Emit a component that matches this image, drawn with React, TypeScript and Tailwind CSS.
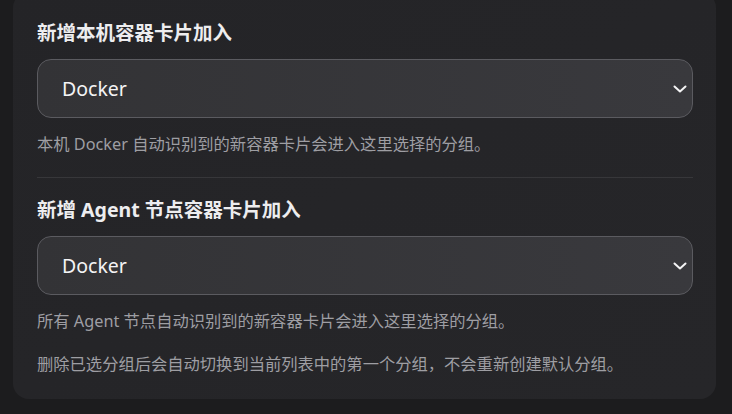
import { useState } from 'react'

const groups = ['Docker', 'Default', 'Web', 'Database']

interface GroupSelectProps {
  value: string
  onChange: (value: string) => void
}

function GroupSelect({ value, onChange }: GroupSelectProps) {
  return (
    <div className="relative">
      <select
        value={value}
        onChange={(e) => onChange(e.target.value)}
        className="block w-full h-[59px] appearance-none rounded-[14px] border border-[#5b5b60] bg-gradient-to-r from-[#333336] to-[#39393d] pl-6 pr-10 pt-px text-[19.5px] text-[#f4f4f5] outline-none"
      >
        {groups.map((g) => (
          <option key={g} value={g}>
            {g}
          </option>
        ))}
      </select>
      <svg
        viewBox="0 0 14 8"
        className="pointer-events-none absolute right-[6px] top-1/2 -translate-y-1/2 w-[14px] h-[8px]"
        fill="none"
        stroke="#f4f4f5"
        strokeWidth="2"
        strokeLinecap="round"
        strokeLinejoin="round"
      >
        <polyline points="1.5,1.5 7,6.5 12.5,1.5" />
      </svg>
    </div>
  )
}

export default function App() {
  const [local, setLocal] = useState('Docker')
  const [agent, setAgent] = useState('Docker')

  return (
    <div
      className="min-h-[414px] w-full bg-[#1c1c1e] overflow-hidden"
      style={{ fontFamily: '"Noto Sans", "Noto Sans CJK SC", sans-serif' }}
    >
      <section className="-mt-2 ml-[13px] w-[703px] rounded-2xl bg-gradient-to-br from-[#242427] to-[#262629] pl-6 pr-[23px] pt-[27px] pb-[23px]">
        <h3 className="text-[19.5px] leading-7 font-bold text-[#ededef]">
          新增本机容器卡片加入
        </h3>
        <div className="mt-3">
          <GroupSelect value={local} onChange={setLocal} />
        </div>
        <p className="mt-[14px] text-[16.3px] leading-6 text-[#9e9ea3]">
          本机 Docker 自动识别到的新容器卡片会进入这里选择的分组。
        </p>

        <div className="mt-[21px] mb-[18px] h-px bg-[#37373a]" />

        <h3 className="text-[19.5px] leading-7 font-bold text-[#ededef]">
          新增 Agent 节点容器卡片加入
        </h3>
        <div className="mt-3">
          <GroupSelect value={agent} onChange={setAgent} />
        </div>
        <p className="mt-[14px] text-[16.3px] leading-6 text-[#9e9ea3]">
          所有 Agent 节点自动识别到的新容器卡片会进入这里选择的分组。
        </p>
        <p className="mt-[19px] text-[16.3px] leading-6 text-[#9e9ea3]">
          删除已选分组后会自动切换到当前列表中的第一个分组，不会重新创建默认分组。
        </p>
      </section>
    </div>
  )
}
